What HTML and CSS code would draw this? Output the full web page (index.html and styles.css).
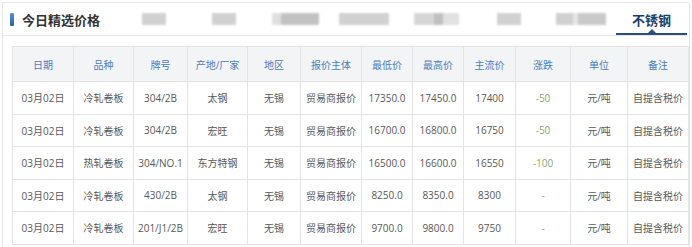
FILE: index.html
```html
<!DOCTYPE html>
<html lang="zh">
<head>
<meta charset="utf-8">
<title>今日精选价格</title>
<link rel="stylesheet" href="styles.css">
</head>
<body>
<div class="panel">
  <div class="head">
    <div class="title"><span class="mark"></span>今日精选价格</div>
    <div class="tabs">
      <span class="blur b1"></span>
      <span class="blur b2"></span>
      <span class="blur b3"></span>
      <span class="blur b4"></span>
      <span class="blur b5"></span>
      <span class="blur b6"></span>
      <span class="blur b7"></span>
      <span class="tab active">不锈钢</span>
    </div>
  </div>
  <div class="body">
    <table class="grid">
      <colgroup>
        <col class="c1"><col class="c2"><col class="c3"><col class="c4"><col class="c5"><col class="c6">
        <col class="c7"><col class="c8"><col class="c9"><col class="c10"><col class="c11"><col class="c12">
      </colgroup>
      <thead>
        <tr><th>日期</th><th>品种</th><th>牌号</th><th>产地/厂家</th><th>地区</th><th>报价主体</th><th>最低价</th><th>最高价</th><th>主流价</th><th>涨跌</th><th>单位</th><th>备注</th></tr>
      </thead>
      <tbody>
        <tr><td>03月02日</td><td>冷轧卷板</td><td>304/2B</td><td>太钢</td><td>无锡</td><td>贸易商报价</td><td>17350.0</td><td>17450.0</td><td>17400</td><td class="down">-50</td><td>元/吨</td><td>自提含税价</td></tr>
        <tr><td>03月02日</td><td>冷轧卷板</td><td>304/2B</td><td>宏旺</td><td>无锡</td><td>贸易商报价</td><td>16700.0</td><td>16800.0</td><td>16750</td><td class="down">-50</td><td>元/吨</td><td>自提含税价</td></tr>
        <tr><td>03月02日</td><td>热轧卷板</td><td>304/NO.1</td><td>东方特钢</td><td>无锡</td><td>贸易商报价</td><td>16500.0</td><td>16600.0</td><td>16550</td><td class="down">-100</td><td>元/吨</td><td>自提含税价</td></tr>
        <tr><td>03月02日</td><td>冷轧卷板</td><td>430/2B</td><td>太钢</td><td>无锡</td><td>贸易商报价</td><td>8250.0</td><td>8350.0</td><td>8300</td><td class="flat">-</td><td>元/吨</td><td>自提含税价</td></tr>
        <tr><td>03月02日</td><td>冷轧卷板</td><td>201/J1/2B</td><td>宏旺</td><td>无锡</td><td>贸易商报价</td><td>9700.0</td><td>9800.0</td><td>9750</td><td class="flat">-</td><td>元/吨</td><td>自提含税价</td></tr>
      </tbody>
    </table>
  </div>
</div>
</body>
</html>
```
FILE: styles.css
```css
html, body {
  margin: 0;
  padding: 0;
  background: #ffffff;
}
body {
  font-family: "Open Sans", "Noto Sans CJK SC", sans-serif;
  color: #555;
}
.panel {
  margin: 2px 2px 0 2px;
  height: 245px;
  border: 1px solid #e8e8e8;
  border-bottom: none;
  box-sizing: border-box;
}
.head {
  height: 33px;
  border-bottom: 1px solid #e6e6e6;
  display: flex;
  align-items: stretch;
  box-sizing: border-box;
}
.title {
  display: flex;
  align-items: center;
  padding-left: 7px;
  font-size: 13px;
  font-weight: bold;
  color: #333;
}
.mark {
  width: 4px;
  height: 13px;
  background: linear-gradient(#5b8fd6, #2c62b0);
  margin-right: 8px;
  border-radius: 1px;
}
.tabs {
  display: flex;
  align-items: center;
  flex: 1;
}
.blur {
  height: 12px;
  background: #c9c9c9;
  filter: blur(1px);
  opacity: 0.85;
}
.b1 { width: 24px; margin-left: 42px; }
.b2 { width: 24px; margin-left: 46px; }
.b3 { width: 47px; margin-left: 36px; background: linear-gradient(90deg, #dadada 0 20%, #b8b8b8 20% 100%); }
.b4 { width: 50px; margin-left: 20px; }
.b5 { width: 45px; margin-left: 25px; background: linear-gradient(90deg, #d0d0d0 0 45%, #b5b5b5 45% 65%, #dcdcdc 65%); }
.b6 { width: 24px; margin-left: 38px; }
.b7 { width: 50px; margin-left: 35px; background: linear-gradient(90deg, #c8c8c8 0 35%, #e2e2e2 35% 45%, #c0c0c0 45%); }
.tab {
  position: relative;
  align-self: stretch;
  display: flex;
  align-items: center;
  justify-content: center;
  width: 71px;
  margin-left: 10px;
  font-size: 13px;
  font-weight: bold;
  color: #1e3f6c;
}
.tab.active::after {
  content: "";
  position: absolute;
  left: 0;
  right: 0;
  bottom: 0;
  height: 2px;
  background: #2b4e7d;
}
.tab.active::before {
  content: "";
  position: absolute;
  left: 50%;
  bottom: 2px;
  margin-left: -4px;
  border-left: 4px solid transparent;
  border-right: 4px solid transparent;
  border-bottom: 4px solid #2b4e7d;
}
.body {
  padding: 10px 0 0 9px;
}
.grid {
  border-collapse: collapse;
  table-layout: fixed;
  width: 676px;
  font-size: 10px;
  text-align: center;
}
.c1 { width: 61px; }
.c2 { width: 60px; }
.c3 { width: 54px; }
.c4 { width: 60px; }
.c5 { width: 53px; }
.c6 { width: 61px; }
.c7 { width: 51px; }
.c8 { width: 51px; }
.c9 { width: 52px; }
.c10 { width: 55px; }
.c11 { width: 57px; }
.c12 { width: 61px; }
.grid th, .grid td {
  border: 1px solid #e4e4e4;
  padding: 0;
  box-sizing: border-box;
  white-space: nowrap;
  overflow: hidden;
}
.grid th {
  height: 35px;
  background: #f3f4f6;
  color: #4a7dbd;
  font-weight: normal;
}
.grid td {
  height: 32.5px;
  color: #585858;
}
.grid td.down { color: #8aa86e; }
.grid td.flat { color: #999; }
```
